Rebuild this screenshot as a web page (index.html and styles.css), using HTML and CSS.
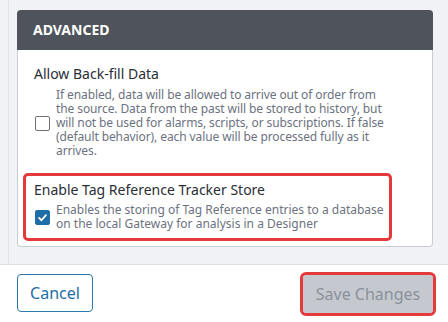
FILE: index.html
```html
<!DOCTYPE html>
<html>
<head>
<meta charset="utf-8">
<link rel="stylesheet" href="styles.css">
</head>
<body>
<div class="page">
  <div class="main">
    <section class="card">
      <header class="card-head">ADVANCED</header>
      <div class="card-body">
        <div class="field field-plain">
          <div class="field-title">Allow Back-fill Data</div>
          <div class="field-row">
            <span class="checkbox"></span>
            <p class="field-desc tight">If enabled, data will be allowed to arrive out of order from the source. Data from the past will be stored to history, but will not be used for alarms, scripts, or subscriptions. If false (default behavior), each value will be processed fully as it arrives.</p>
          </div>
        </div>
        <div class="field field-marked">
          <div class="field-title">Enable Tag Reference Tracker Store</div>
          <div class="field-row">
            <span class="checkbox checked"><svg viewBox="0 0 16 16" width="11" height="11"><path d="M3 8.5 L6.5 12 L13 4.5" fill="none" stroke="#fff" stroke-width="2.6" stroke-linecap="round" stroke-linejoin="round"/></svg></span>
            <p class="field-desc">Enables the storing of Tag Reference entries to a database on the local Gateway for analysis in a Designer</p>
          </div>
        </div>
      </div>
    </section>
  </div>
  <footer class="footer">
    <button class="btn btn-cancel">Cancel</button>
    <button class="btn btn-save">Save Changes</button>
  </footer>
</div>
</body>
</html>
```

FILE: styles.css
```css
* { box-sizing: border-box; }
html, body { margin: 0; padding: 0; }
body {
  width: 448px;
  height: 322px;
  background: #f1f2f5;
  font-family: "Noto Sans", "Open Sans", sans-serif;
  overflow: hidden;
}
.page {
  display: flex;
  flex-direction: column;
  height: 322px;
}
.main {
  height: 264px;
  margin-left: 8px;
  border-left: 1px solid #dfe2e6;
  padding: 10px 15px 0 8px;
}
.card {
  background: #fff;
  border: 1px solid #c9cdd3;
  border-top: none;
  border-radius: 4px;
}
.card-head {
  height: 40px;
  margin: 0 -1px;
  background: #4f545c;
  color: #fff;
  font-weight: 700;
  font-size: 14px;
  line-height: 40px;
  padding-left: 16px;
  border-radius: 4px 4px 0 0;
}
.card-body {
  padding: 14px 0 5px 16px;
}
.field-plain {
  width: 362px;
}
.field-title {
  font-size: 14px;
  line-height: 20px;
  color: #2a2e35;
  margin-bottom: 4px;
}
.field-row {
  display: flex;
  align-items: center;
}
.checkbox {
  flex: none;
  width: 15px;
  height: 15px;
  margin: 0 6px 0 1px;
  border: 1px solid #6c717a;
  border-radius: 2px;
  display: flex;
  align-items: center;
  justify-content: center;
}
.checkbox.checked {
  background: #1d6ea6;
  border-color: #1d6ea6;
}
.field-desc {
  margin: 0;
  font-size: 12px;
  line-height: 14px;
  color: #6c7280;
}
.tight {
  letter-spacing: -0.1px;
}
.field-marked {
  width: 369px;
  margin: 15px 0 0 -11px;
  border: 3px solid #e53a3b;
  border-radius: 5px;
  padding: 4px 0 7px 8px;
}
.field-marked .field-title {
  margin-bottom: 3px;
}
.footer {
  flex: 1;
  background: #fff;
  border-top: 1px solid #dcdfe3;
  display: flex;
  justify-content: space-between;
  align-items: flex-start;
  padding: 9px 15px 0 17px;
}
.btn {
  height: 38px;
  font-family: "Noto Sans", "Open Sans", sans-serif;
  font-size: 16px;
  border-radius: 4px;
  padding: 0;
  white-space: nowrap;
  cursor: pointer;
}
.btn-cancel {
  width: 76px;
  background: #fff;
  color: #1e6ea3;
  border: 1px solid #2b78ac;
}
.btn-save {
  width: 130px;
  margin-top: 1px;
  background: #c5c9cf;
  color: #8a909a;
  border: 1px solid #c5c9cf;
  outline: 3px solid #e53a3b;
  border-radius: 3px;
}
```
